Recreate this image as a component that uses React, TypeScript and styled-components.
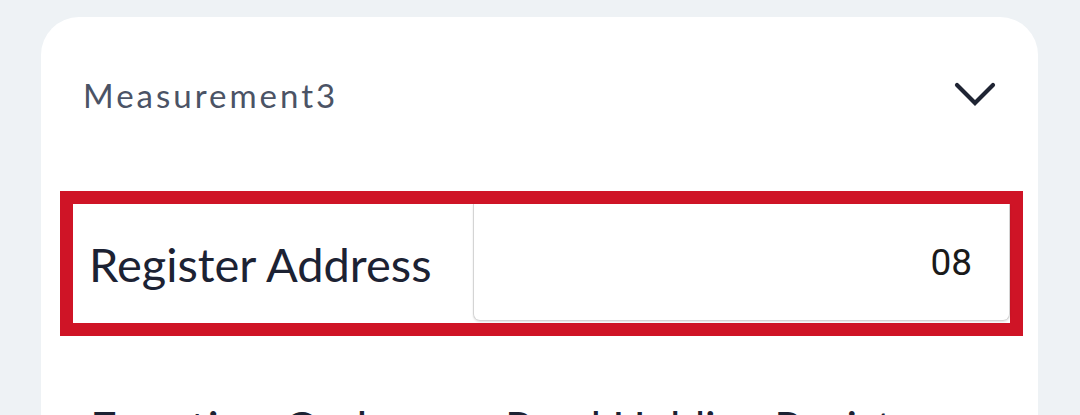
import React, { FC } from 'react'
import styled, { createGlobalStyle } from 'styled-components'

const GlobalStyle = createGlobalStyle`
  html, body {
    margin: 0;
    padding: 0;
    background: #eef2f5;
    font-family: Lato, "Noto Sans", sans-serif;
  }
`

const Page = styled.div`
  height: 415px;
  overflow: hidden;
  padding: 17px 42px 0 41px;
  box-sizing: border-box;
`

const Card = styled.div`
  background: #fff;
  border-radius: 38px 38px 0 0;
  min-height: 420px;
  display: flex;
  flex-direction: column;
`

const Header = styled.div`
  height: 156px;
  margin-bottom: 18px;
  display: flex;
  align-items: center;
  justify-content: space-between;
  padding: 0 42px 0 42px;
`

const Title = styled.span`
  font-size: 33px;
  letter-spacing: 3px;
  color: #4b5365;
`

const Chevron = styled.svg`
  width: 42px;
  height: 26px;
  display: block;
`

const Highlight = styled.div`
  margin: 0 15px 0 19px;
  border: 13px solid #cf1426;
`

const Row = styled.div<{ $gap?: number }>`
  display: flex;
  align-items: center;
  height: 119px;
  margin-top: ${p => p.$gap ?? 0}px;
`

const Label = styled.div<{ $pad: number }>`
  width: 400px;
  flex: none;
  box-sizing: border-box;
  padding-left: ${p => p.$pad}px;
  font-size: 47px;
  color: #1c2233;
`

const Input = styled.div`
  flex: 1;
  align-self: flex-start;
  height: 117px;
  box-sizing: border-box;
  border: 1.5px solid #d4d4d4;
  border-top: none;
  border-radius: 0 0 7px 7px;
  box-shadow: 0 1px 2px rgba(0, 0, 0, 0.12);
  display: flex;
  align-items: center;
  justify-content: flex-end;
  padding-right: 37px;
  font-family: Roboto, "Noto Sans", sans-serif;
  font-size: 37px;
  color: #1a1a1a;
`

const Value = styled.div`
  flex: 1;
  padding-left: 64px;
  font-size: 44px;
  color: #1c2233;
`

const App: FC = () => {
  return (
    <Page>
      <GlobalStyle />
      <Card>
        <Header>
          <Title>Measurement3</Title>
          <Chevron viewBox="0 0 42 26">
            <polyline points="3,3 21,21 39,3" fill="none" stroke="#1f2433" strokeWidth="4.2" strokeLinecap="round" strokeLinejoin="miter" />
          </Chevron>
        </Header>
        <Highlight>
          <Row>
            <Label $pad={16}>Register Address</Label>
            <Input>08</Input>
          </Row>
        </Highlight>
        <Row $gap={31}>
          <Label $pad={49}>Function Code</Label>
          <Value>Read Holding Register</Value>
        </Row>
      </Card>
    </Page>
  )
}

export default App
